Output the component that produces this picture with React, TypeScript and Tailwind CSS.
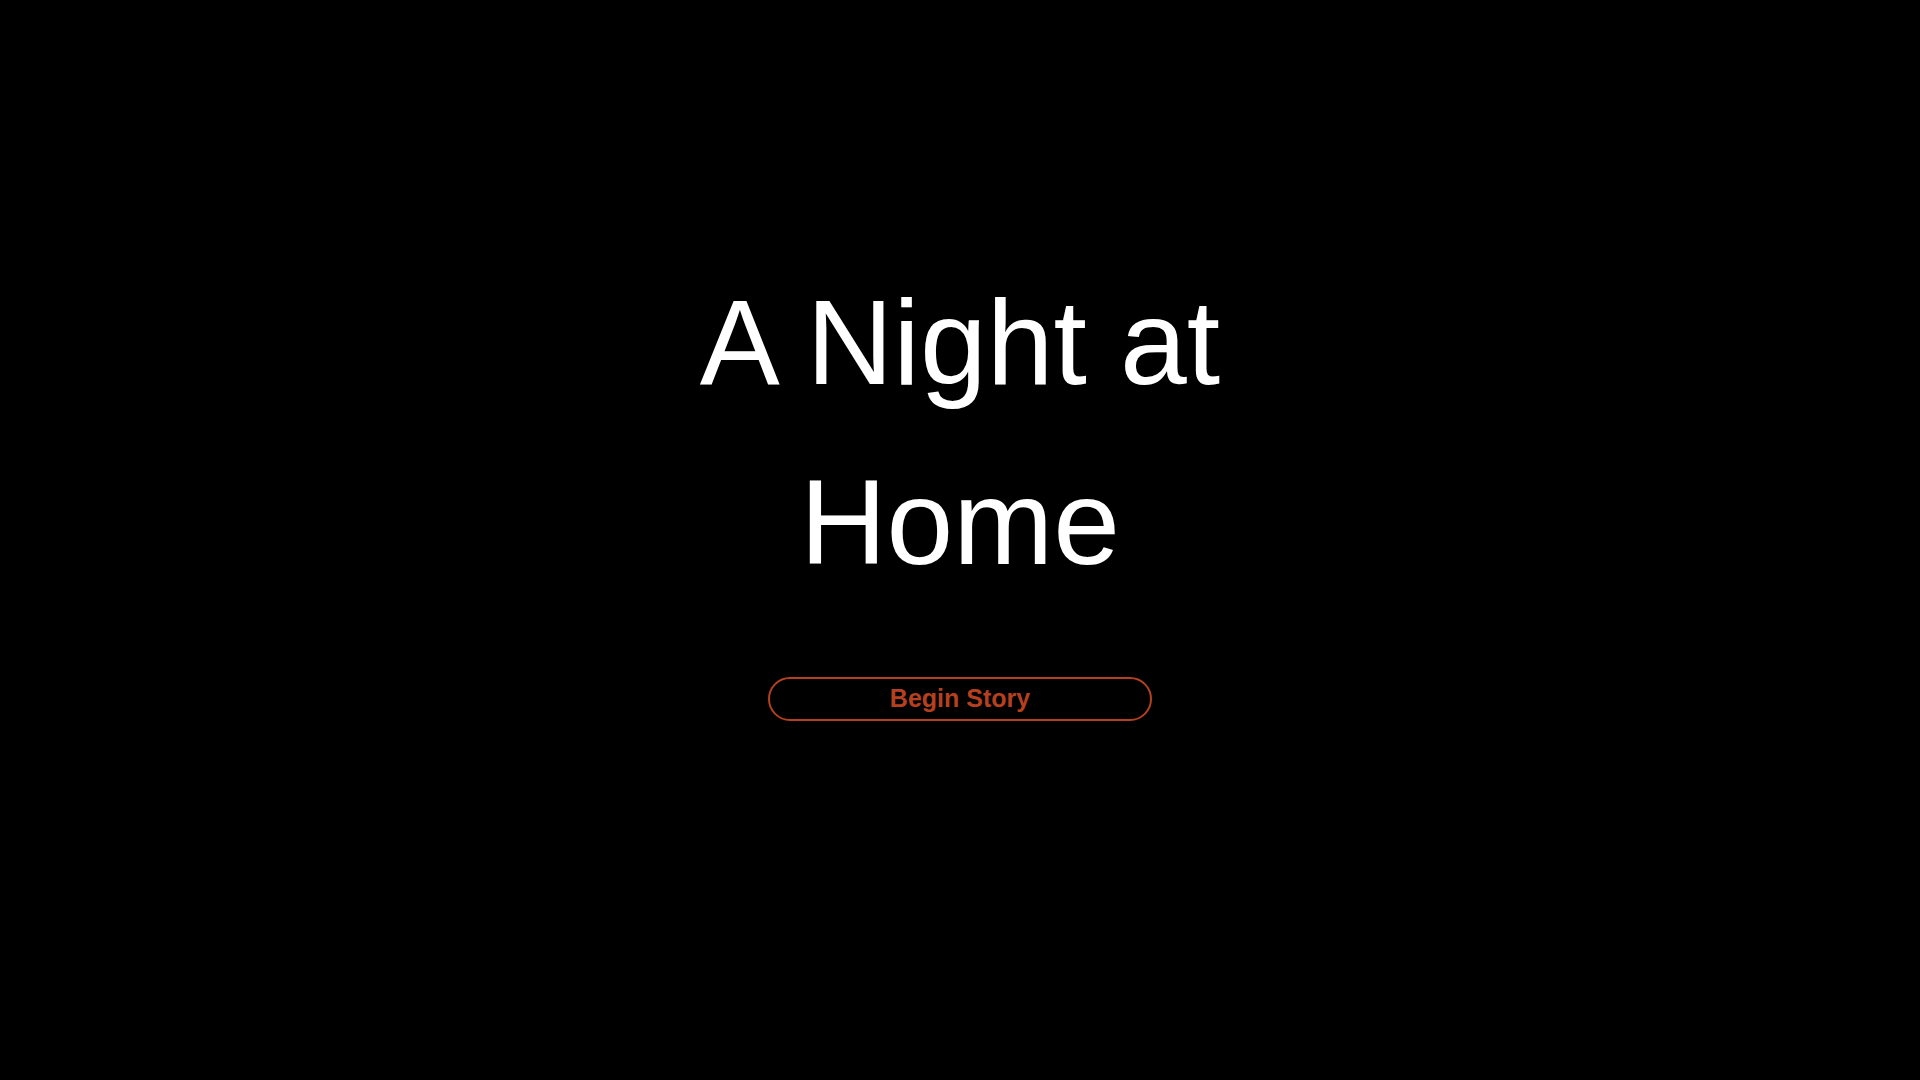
export default function App() {
  return (
    <div className="min-h-screen bg-black flex flex-col items-center pt-[252px] font-['Liberation_Sans',Arial,sans-serif]">
      <h1 className="w-[560px] text-center text-white text-[120px] leading-[180px] font-normal">
        A Night at Home
      </h1>
      <button className="mt-[65px] w-96 h-[44px] rounded-[22px] border-2 border-[#b5401f] text-[#b5401f] text-[25px] font-bold">
        Begin Story
      </button>
    </div>
  );
}
